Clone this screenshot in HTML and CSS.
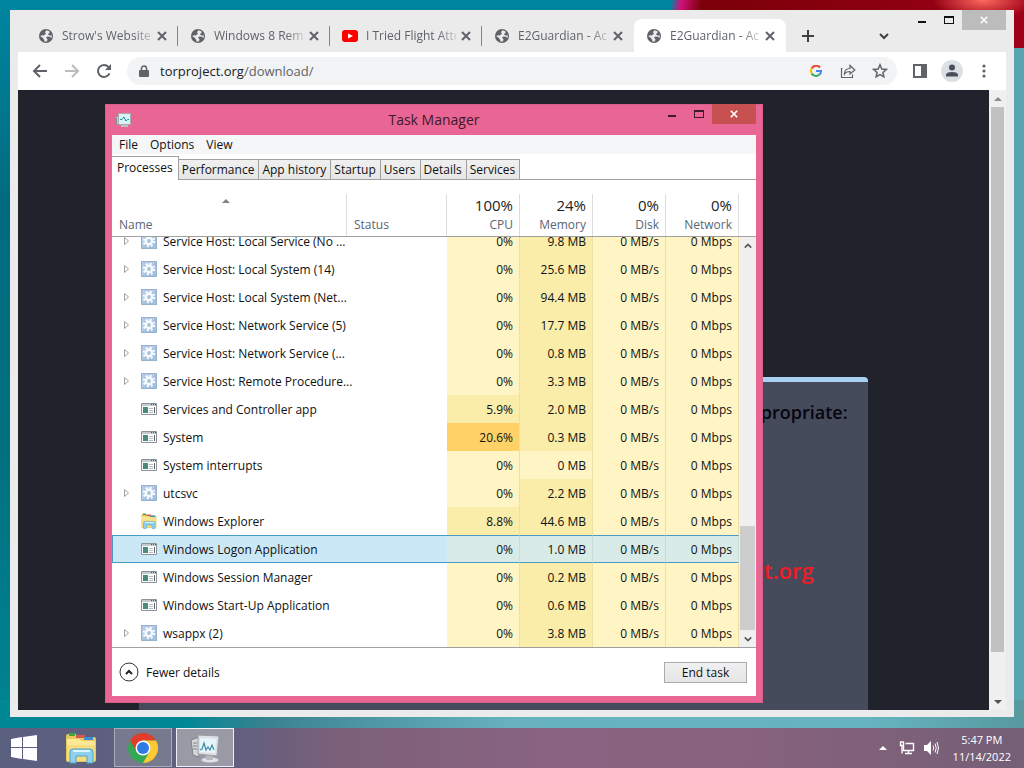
FILE: index.html
```html
<!DOCTYPE html>
<html lang="en">
<head>
  <meta charset="UTF-8">
  <meta name="viewport" content="width=device-width, initial-scale=1.0">
  <title>Desktop</title>
  <link rel="stylesheet" href="styles.css">
</head>
<body>
  <!-- shared icons -->
  <svg class="sprite" aria-hidden="true">
    <symbol id="globe" viewBox="0 0 16 16">
      <circle cx="8" cy="8" r="7" fill="#5f6368"/>
      <path d="M8.6 2.2 6.8 4.3 8 5.6 6.3 7.2 3.2 7.6 2.4 8.6 4.6 9.6 6.4 12.2 6.2 13.6 8.8 13.4 9.6 11.6 8 9.8 9.6 8.4 12 8.8 13.6 10 13.8 7.6 11.6 7.4 9.8 6.2 11.6 4.8 11.4 3.2z" fill="#ececee"/>
    </symbol>
    <symbol id="close" viewBox="0 0 10 10">
      <path d="M1 1 9 9M9 1 1 9" fill="none" stroke="currentColor" stroke-width="2"/>
    </symbol>
    <symbol id="minimize" viewBox="0 0 10 10">
      <path d="M1 6H9V8H1z" fill="currentColor"/>
    </symbol>
    <symbol id="maximize" viewBox="0 0 10 10">
      <path d="M0 1H10V9H0zM1 3V8H9V3z" fill="currentColor" fill-rule="evenodd"/>
    </symbol>
    <symbol id="chevron" viewBox="0 0 10 10">
      <path d="M1 3 5 7 9 3" fill="none" stroke="currentColor" stroke-width="2"/>
    </symbol>
    <symbol id="expand" viewBox="0 0 8 10">
      <path d="M1.500 1.500V8.500L5.500 5z" fill="#fff" stroke="#a0a0a0"/>
    </symbol>
    <symbol id="gear" viewBox="0 0 16 16">
      <path d="M0 0H16V16H0z" fill="#a3bfdc"/>
      <path d="M0 16V0H16L0 16z" fill="#b4cce5"/>
      <path d="M.5.5H15.500V15.500H.5z" fill="none" stroke="#97b2d0"/>
      <circle cx="8" cy="8" r="5.200" fill="none" stroke="#f8fbff" stroke-width="2.200" stroke-dasharray="2.040 2.040"/>
      <circle cx="8" cy="8" r="3.200" fill="#a9c3de" stroke="#f8fbff" stroke-width="2.400"/>
    </symbol>
    <symbol id="app" viewBox="0 0 16 16">
      <path d="M.5 2.500H15.500V13.500H.5z" fill="#fdfdfd" stroke="#8d9499"/>
      <path d="M1 3H15V5H1z" fill="#c3c9ce"/>
      <path d="M10 3.500H11M12 3.500H13M14 3.500H15" stroke="#555"/>
      <path d="M2 6H7V12H2z" fill="#4a8a78"/>
      <path d="M8 7.500H12M8 9.500H12M8 11.500H12" stroke="#b9bdc2"/>
      <path d="M13.500 6V12" stroke="#5f6468"/>
    </symbol>
    <symbol id="folder" viewBox="0 0 32 32">
      <path d="M1 4Q1 2 3 2H11L13 5H29Q31 5 31 7V28Q31 30 29 30H3Q1 30 1 28z" fill="#e6c95c"/>
      <path d="M4 1H10V4H4z" fill="#3ba648"/>
      <path d="M11 3H20V6H11z" fill="#d9574c"/>
      <path d="M19 5H28V8H19z" fill="#3c8fd0"/>
      <path d="M2 7H14L17 9H30V27H2z" fill="#fbe795"/>
      <path d="M2 13H30V28Q30 29 29 29H3Q2 29 2 28z" fill="#f5dc7c"/>
      <path d="M5 31V20Q5 17 8 17H25Q28 17 28 20V31H22V24H11V31z" fill="#8fd0ec" stroke="#4fa3cc"/>
      <path d="M8 19H25" stroke="#dff5ff" stroke-width="2"/>
    </symbol>
    <symbol id="monitor" viewBox="0 0 32 32">
      <path d="M2 8 10 5V25L4 23z" fill="#d6d9dc" stroke="#7c8286"/>
      <path d="M4 11H8M4 14H8M4 17H8" stroke="#7c8286"/>
      <ellipse cx="21" cy="28" rx="9" ry="3" fill="#dfe2e4" stroke="#a1a5a8"/>
      <path d="M17 22H24V28H17z" fill="#b7bbbe"/>
      <path d="M9 3 30 4 28 24 9 22z" fill="#dfe2e4" stroke="#999ea2"/>
      <path d="M11 6 27 7 26 21 11 20z" fill="#e7f6fb"/>
      <path d="M11 18 13 17 15 11 17 18 19 15 21 18 23 13 25 18" fill="none" stroke="#3d8eaa" stroke-width="1.200"/>
    </symbol>
    <symbol id="monitor-small" viewBox="0 0 16 16">
      <path d="M.5 4.500H4V12.500H1.500V6" fill="#c9ced2" stroke="#7f8a90"/>
      <path d="M6 13H13V15H6z" fill="#b9c2c6"/>
      <path d="M3.500 1.500H15.500V12.500H3.500z" fill="#e6eaec" stroke="#a5adb2"/>
      <path d="M5 3H14V11H5z" fill="#d5f3f6"/>
      <path d="M5 7.500H7L9 5 11 9 12.500 7.500H14" fill="none" stroke="#2a8c98"/>
    </symbol>
  </svg>

  <div class="desktop">
    <main class="workspace">
      <section class="browser" aria-label="Browser">
        <header class="tab-strip">
          <div class="tab">
            <svg class="icon16"><use href="#globe"/></svg>
            <span class="tab-title">Strow's Website</span>
            <button class="tab-close" aria-label="Close tab"><svg><use href="#close"/></svg></button>
          </div>
          <div class="tab">
            <svg class="icon16"><use href="#globe"/></svg>
            <span class="tab-title">Windows 8 Rem</span>
            <button class="tab-close" aria-label="Close tab"><svg><use href="#close"/></svg></button>
          </div>
          <div class="tab">
            <svg class="icon16" viewBox="0 0 16 16"><rect y="2" width="16" height="12" rx="3" fill="#f00"/><path d="M6 5.500V10.500L11 8z" fill="#fff"/></svg>
            <span class="tab-title">I Tried Flight Atte</span>
            <button class="tab-close" aria-label="Close tab"><svg><use href="#close"/></svg></button>
          </div>
          <div class="tab last">
            <svg class="icon16"><use href="#globe"/></svg>
            <span class="tab-title">E2Guardian - Ac</span>
            <button class="tab-close" aria-label="Close tab"><svg><use href="#close"/></svg></button>
          </div>
          <div class="tab active">
            <svg class="icon16"><use href="#globe"/></svg>
            <span class="tab-title">E2Guardian - Ac</span>
            <button class="tab-close" aria-label="Close tab"><svg><use href="#close"/></svg></button>
          </div>
          <button class="new-tab" aria-label="New tab"><svg viewBox="0 0 12 12"><path d="M6 0V12M0 6H12" stroke="#3c4043" stroke-width="2"/></svg></button>
          <button class="tab-search" aria-label="Search tabs"><svg><use href="#chevron"/></svg></button>
          <div class="window-controls">
            <button aria-label="Minimize"><svg><use href="#minimize"/></svg></button>
            <button aria-label="Maximize"><svg><use href="#maximize"/></svg></button>
            <button class="close" aria-label="Close"><svg><use href="#close"/></svg></button>
          </div>
        </header>

        <nav class="toolbar">
          <button class="tool" aria-label="Back"><svg viewBox="0 0 16 16"><path d="M15 8H2M8 2 2 8 8 14" fill="none" stroke="#5f6368" stroke-width="2"/></svg></button>
          <button class="tool" aria-label="Forward"><svg viewBox="0 0 16 16"><path d="M1 8H14M8 2 14 8 8 14" fill="none" stroke="#babcbe" stroke-width="2"/></svg></button>
          <button class="tool" aria-label="Reload"><svg viewBox="0 0 16 16"><path d="M13.500 10.300A6 6 0 1 1 12.500 4" fill="none" stroke="#5f6368" stroke-width="2"/><path d="M15 1V7H9z" fill="#5f6368"/></svg></button>
          <div class="address">
            <svg class="lock" viewBox="0 0 10 12"><path d="M1 5H9Q10 5 10 6V11Q10 12 9 12H1Q0 12 0 11V6Q0 5 1 5z" fill="#5f6368"/><path d="M2.500 5V3.500A2.500 2.500 0 0 1 7.500 3.500V5" fill="none" stroke="#5f6368" stroke-width="1.500"/></svg>
            <a class="url" href="#"><span>torproject.org</span>/download/</a>
            <button class="tool" aria-label="Google"><svg class="small" viewBox="0 0 12 12"><path d="M10 2.500A5 5 0 0 0 1.700 3.500" fill="none" stroke="#ea4335" stroke-width="2"/><path d="M1.700 3.500A5 5 0 0 0 1.700 8.500" fill="none" stroke="#fbbc05" stroke-width="2"/><path d="M1.700 8.500A5 5 0 0 0 9.200 9.800" fill="none" stroke="#34a853" stroke-width="2"/><path d="M9.200 9.800A5 5 0 0 0 11 6H6" fill="none" stroke="#4285f4" stroke-width="2"/></svg></button>
            <button class="tool" aria-label="Share"><svg viewBox="0 0 16 16"><path d="M2.500 5.500H1.500V14.500H12.500V11.500M4.500 11Q4.500 5.500 10 5.500V2.500L14.800 7 10 11V8.500Q6 8.500 4.500 11z" fill="none" stroke="#5f6368" stroke-width="1.200"/></svg></button>
            <button class="tool" aria-label="Bookmark"><svg viewBox="0 0 16 16"><path d="M8 1.800 9.800 6 14.300 6.400 10.900 9.400 11.900 13.800 8 11.500 4.100 13.800 5.100 9.400 1.700 6.400 6.200 6z" fill="none" stroke="#5f6368" stroke-width="1.500"/></svg></button>
          </div>
          <button class="tool" aria-label="Side panel"><svg viewBox="0 0 16 16"><path d="M1 1H15V15H1zM3 3V13H9V3z" fill="#5f6368" fill-rule="evenodd"/></svg></button>
          <button class="tool" aria-label="Profile"><svg class="avatar" viewBox="0 0 22 22"><circle cx="11" cy="11" r="11" fill="#dcdfe4"/><circle cx="11" cy="7.500" r="3" fill="#49505c"/><path d="M5 16.500V15Q5 12 11 12T17 15V16.500z" fill="#49505c"/></svg></button>
          <button class="tool" aria-label="Menu"><svg viewBox="0 0 16 16"><circle cx="8" cy="3" r="1.600" fill="#5f6368"/><circle cx="8" cy="8" r="1.600" fill="#5f6368"/><circle cx="8" cy="13" r="1.600" fill="#5f6368"/></svg></button>
        </nav>

        <div class="viewport">
          <div class="page">
            <article class="notice">
              <h2>propriate:</h2>
              <p>t.org</p>
            </article>
          </div>
          <div class="scrollbar page-scroll">
            <button aria-label="Scroll up"><svg viewBox="0 0 8 8"><path d="M0 6 4 2 8 6z" fill="#8b8b8b"/></svg></button>
            <div class="track"><div class="thumb"></div></div>
            <button aria-label="Scroll down"><svg viewBox="0 0 8 8"><path d="M0 2H8L4 6z" fill="#505050"/></svg></button>
          </div>
        </div>
      </section>

      <section class="task-manager" aria-label="Task Manager">
        <header class="title-bar">
          <svg class="icon16"><use href="#monitor-small"/></svg>
          <h1>Task Manager</h1>
          <div class="window-controls">
            <button aria-label="Minimize"><svg><use href="#minimize"/></svg></button>
            <button aria-label="Maximize"><svg><use href="#maximize"/></svg></button>
            <button class="close" aria-label="Close"><svg><use href="#close"/></svg></button>
          </div>
        </header>
        <div class="tm-body">
          <nav class="menu">
            <button>File</button>
            <button>Options</button>
            <button>View</button>
          </nav>
          <div class="tm-tabs" role="tablist">
            <button role="tab" class="selected" aria-selected="true">Processes</button>
            <button role="tab">Performance</button>
            <button role="tab">App history</button>
            <button role="tab">Startup</button>
            <button role="tab">Users</button>
            <button role="tab">Details</button>
            <button role="tab">Services</button>
          </div>

          <div class="head-wrap">
            <svg class="sort" viewBox="0 0 8 4"><path d="M0 4 4 0 8 4z" fill="#808080"/></svg>
            <table class="grid head">
              <colgroup><col class="c-name"><col class="c-status"><col class="c-val"><col class="c-val"><col class="c-val"><col class="c-val"></colgroup>
              <thead>
                <tr>
                  <th>Name</th>
                  <th>Status</th>
                  <th><b>100%</b>CPU</th>
                  <th><b>24%</b>Memory</th>
                  <th><b>0%</b>Disk</th>
                  <th><b>0%</b>Network</th>
                </tr>
              </thead>
            </table>
          </div>

          <div class="list">
            <div class="rows">
              <table class="grid">
                <colgroup><col class="c-name"><col class="c-status"><col class="c-val"><col class="c-val"><col class="c-val"><col class="c-val"></colgroup>
                <tbody>
                  <tr><td><div class="proc"><svg class="arrow"><use href="#expand"/></svg><svg class="icon16"><use href="#gear"/></svg>Service Host: Local Service (No ...</div></td><td></td><td>0%</td><td class="warm">9.8 MB</td><td>0 MB/s</td><td>0 Mbps</td></tr>
                  <tr><td><div class="proc"><svg class="arrow"><use href="#expand"/></svg><svg class="icon16"><use href="#gear"/></svg>Service Host: Local System (14)</div></td><td></td><td>0%</td><td class="warm">25.6 MB</td><td>0 MB/s</td><td>0 Mbps</td></tr>
                  <tr><td><div class="proc"><svg class="arrow"><use href="#expand"/></svg><svg class="icon16"><use href="#gear"/></svg>Service Host: Local System (Net...</div></td><td></td><td>0%</td><td class="warm">94.4 MB</td><td>0 MB/s</td><td>0 Mbps</td></tr>
                  <tr><td><div class="proc"><svg class="arrow"><use href="#expand"/></svg><svg class="icon16"><use href="#gear"/></svg>Service Host: Network Service (5)</div></td><td></td><td>0%</td><td class="warm">17.7 MB</td><td>0 MB/s</td><td>0 Mbps</td></tr>
                  <tr><td><div class="proc"><svg class="arrow"><use href="#expand"/></svg><svg class="icon16"><use href="#gear"/></svg>Service Host: Network Service (...</div></td><td></td><td>0%</td><td class="warm">0.8 MB</td><td>0 MB/s</td><td>0 Mbps</td></tr>
                  <tr><td><div class="proc"><svg class="arrow"><use href="#expand"/></svg><svg class="icon16"><use href="#gear"/></svg>Service Host: Remote Procedure...</div></td><td></td><td>0%</td><td class="warm">3.3 MB</td><td>0 MB/s</td><td>0 Mbps</td></tr>
                  <tr><td><div class="proc"><span class="arrow"></span><svg class="icon16"><use href="#app"/></svg>Services and Controller app</div></td><td></td><td class="warm">5.9%</td><td class="warm">2.0 MB</td><td>0 MB/s</td><td>0 Mbps</td></tr>
                  <tr><td><div class="proc"><span class="arrow"></span><svg class="icon16"><use href="#app"/></svg>System</div></td><td></td><td class="hot">20.6%</td><td class="warm">0.3 MB</td><td>0 MB/s</td><td>0 Mbps</td></tr>
                  <tr><td><div class="proc"><span class="arrow"></span><svg class="icon16"><use href="#app"/></svg>System interrupts</div></td><td></td><td>0%</td><td>0 MB</td><td>0 MB/s</td><td>0 Mbps</td></tr>
                  <tr><td><div class="proc"><svg class="arrow"><use href="#expand"/></svg><svg class="icon16"><use href="#gear"/></svg>utcsvc</div></td><td></td><td>0%</td><td class="warm">2.2 MB</td><td>0 MB/s</td><td>0 Mbps</td></tr>
                  <tr><td><div class="proc"><span class="arrow"></span><svg class="icon16"><use href="#folder"/></svg>Windows Explorer</div></td><td></td><td class="warm">8.8%</td><td class="warm">44.6 MB</td><td>0 MB/s</td><td>0 Mbps</td></tr>
                  <tr class="selected"><td><div class="proc"><span class="arrow"></span><svg class="icon16"><use href="#app"/></svg>Windows Logon Application</div></td><td></td><td>0%</td><td>1.0 MB</td><td>0 MB/s</td><td>0 Mbps</td></tr>
                  <tr><td><div class="proc"><span class="arrow"></span><svg class="icon16"><use href="#app"/></svg>Windows Session Manager</div></td><td></td><td>0%</td><td class="warm">0.2 MB</td><td>0 MB/s</td><td>0 Mbps</td></tr>
                  <tr><td><div class="proc"><span class="arrow"></span><svg class="icon16"><use href="#app"/></svg>Windows Start-Up Application</div></td><td></td><td>0%</td><td class="warm">0.6 MB</td><td>0 MB/s</td><td>0 Mbps</td></tr>
                  <tr><td><div class="proc"><svg class="arrow"><use href="#expand"/></svg><svg class="icon16"><use href="#gear"/></svg>wsappx (2)</div></td><td></td><td>0%</td><td class="warm">3.8 MB</td><td>0 MB/s</td><td>0 Mbps</td></tr>
                </tbody>
              </table>
            </div>
            <div class="scrollbar list-scroll">
              <button class="up" aria-label="Scroll up"><svg><use href="#chevron"/></svg></button>
              <div class="track"><div class="thumb"></div></div>
              <button aria-label="Scroll down"><svg><use href="#chevron"/></svg></button>
            </div>
          </div>

          <footer class="tm-footer">
            <button class="fewer">
              <svg viewBox="0 0 20 20"><circle cx="10" cy="10" r="9" fill="#fff" stroke="#333"/><path d="M7 12 10 9 13 12" fill="none" stroke="#222" stroke-width="2"/></svg>
              Fewer details
            </button>
            <button class="end-task">End task</button>
          </footer>
        </div>
      </section>
    </main>

    <footer class="taskbar">
      <button class="start" aria-label="Start"><svg viewBox="0 0 26 26"><path d="M0 4 11 2V12H0zM12 2 26 0V12H12zM0 13H11V24L0 22zM12 13H26V26L12 24z" fill="#fff"/></svg></button>
      <button class="task" aria-label="File Explorer"><svg><use href="#folder"/></svg></button>
      <button class="task open" aria-label="Chrome">
        <svg viewBox="0 0 32 32">
          <circle cx="16" cy="16" r="15" fill="#34a853"/>
          <path d="M3 8.500A15 15 0 0 1 29 8.500H16L9.500 19.800z" fill="#e33b2e"/>
          <path d="M29 8.500A15 15 0 0 1 16 31L22.500 19.800 16 8.500z" fill="#fcc934"/>
          <circle cx="16" cy="16" r="7.500" fill="#fff"/>
          <circle cx="16" cy="16" r="6" fill="#2f7ae5"/>
        </svg>
      </button>
      <button class="task open current" aria-label="Task Manager"><svg><use href="#monitor"/></svg></button>
      <div class="tray">
        <button aria-label="Show hidden icons"><svg class="tiny" viewBox="0 0 8 4"><path d="M0 4 4 0 8 4z" fill="#fff"/></svg></button>
        <button aria-label="Network"><svg viewBox="0 0 16 16"><path d="M6.500 3.500H14.500V10.500H4.500V6M9.500 10.500V13M6 13.500H13" fill="none" stroke="#fff" stroke-width="1.400"/><path d="M1.500 2H4.500V5.500H1.500zM3 5.500V13.500" fill="none" stroke="#fff" stroke-width="1.400"/></svg></button>
        <button aria-label="Volume"><svg viewBox="0 0 16 16"><path d="M1 5H4L8 1V15L4 11H1z" fill="#fff"/><path d="M10 5.500Q11.500 8 10 10.500M12 3.500Q14.500 8 12 12.500M14 2Q17 8 14 14" fill="none" stroke="#fff"/></svg></button>
        <time class="clock" datetime="2022-11-14T17:47">5:47 PM<br>11/14/2022</time>
      </div>
    </footer>
  </div>
</body>
</html>
```
FILE: styles.css
```css
* {
  box-sizing: border-box;
}

body {
  margin: 0;
  font-family: 'Open Sans', 'Noto Sans', sans-serif;
  font-size: 12px;
  color: #111;
}

button {
  display: flex;
  align-items: center;
  justify-content: center;
  padding: 0;
  border: none;
  background: none;
  font: inherit;
  color: inherit;
}

svg {
  display: block;
  flex: none;
}

.sprite {
  position: absolute;
  width: 0;
  height: 0;
}

.icon16 {
  width: 16px;
  height: 16px;
}

.desktop {
  display: flex;
  flex-direction: column;
  height: 100vh;
  overflow: hidden;
  background:
    radial-gradient(ellipse 50px 20px at 96% 0, #ff6a60, transparent) no-repeat,
    linear-gradient(100deg, transparent 65%, #d0107a 66%, #7c0008 68%, #8a0010 85%, #a00018) top / 100% 48px no-repeat,
    linear-gradient(90deg, #008896, #008896 18%, #3a8290 26%, #68b2bf 50%, #66b4c0 85%, #57999f) 0 700px / 100% 40px no-repeat,
    linear-gradient(90deg, transparent 50%, #57a5ae 50%) 0 48px no-repeat,
    linear-gradient(#0086a0, #006b80 200px, #00707f 450px, #008896);
}

.workspace {
  position: relative;
  flex: 1;
}

/* browser window */
.browser {
  position: absolute;
  inset: 10px 10px 11px 10px;
  display: flex;
  flex-direction: column;
  padding: 0 8px 7px;
  background: #ebebeb;
}

.tab-strip {
  display: flex;
  align-items: flex-end;
  height: 42px;
  padding-left: 8px;
}

.tab {
  display: flex;
  align-items: center;
  flex: 0 1 152px;
  min-width: 0;
  height: 33px;
  padding: 0 10px 0 12px;
  color: #5f6368;
  background: linear-gradient(#808488, #808488) right center / 1px 20px no-repeat;
}

.tab.last {
  background: none;
}

.tab.active {
  background: #fff;
  border-radius: 8px 8px 0 0;
}

.tab-title {
  flex: 1;
  margin-left: 8px;
  overflow: hidden;
  white-space: nowrap;
  mask-image: linear-gradient(90deg, #000 80%, transparent 105%);
}

.tab-close {
  width: 12px;
  height: 20px;
  margin-left: 4px;
}

.tab-close svg,
.tab-search svg {
  width: 10px;
  height: 10px;
}

.new-tab {
  width: 44px;
  height: 33px;
}

.new-tab svg {
  width: 12px;
  height: 12px;
}

.tab-search {
  width: 28px;
  height: 33px;
  margin-left: auto;
  margin-right: 10px;
  color: #3c4043;
}

.window-controls {
  display: flex;
  align-self: flex-start;
  height: 20px;
}

.window-controls button {
  width: 27px;
  height: 20px;
}

.window-controls .close {
  width: 44px;
  background: #bcbcbc;
  color: #fff;
}

.window-controls svg {
  width: 10px;
  height: 10px;
}

.window-controls .close svg {
  width: 8px;
  height: 8px;
}

.toolbar {
  display: flex;
  align-items: center;
  height: 38px;
  padding: 0 6px;
  background: #fff;
}

.tool {
  width: 32px;
  height: 26px;
}

.tool svg {
  width: 16px;
  height: 16px;
}

.tool .small {
  width: 12px;
  height: 12px;
}

.tool .avatar {
  width: 22px;
  height: 22px;
}

.address {
  display: flex;
  align-items: center;
  flex: 1;
  height: 28px;
  margin: 0 7px;
  padding: 0 1px 0 12px;
  border-radius: 14px;
  background: #f1f3f4;
}

.lock {
  width: 10px;
  height: 12px;
}

.url {
  flex: 1;
  margin-left: 11px;
  font-size: 13px;
  color: #5f6368;
  text-decoration: none;
}

.url span {
  color: #202124;
}

.viewport {
  display: flex;
  flex: 1;
  min-height: 0;
}

.page {
  flex: 1;
  overflow: hidden;
  background: #20222c;
}

.notice {
  width: 75%;
  height: 100%;
  margin: 287px auto 0;
  padding: 19px 20px;
  border-top: 5px solid #a8d0f5;
  border-radius: 4px 4px 0 0;
  background: #464b5b;
  text-align: right;
}

.notice h2 {
  margin: 0;
  font-size: 18px;
  font-weight: 600;
  line-height: 22px;
  color: #050510;
}

.notice p {
  margin: 132px 34px 0 0;
  font-size: 22px;
  font-weight: 600;
  line-height: 30px;
  color: #ee1c24;
}

.scrollbar {
  display: flex;
  flex-direction: column;
  width: 17px;
  background: #f0f0f0;
}

.scrollbar button {
  height: 17px;
}

.scrollbar svg {
  width: 8px;
  height: 8px;
}

.track {
  flex: 1;
}

.page-scroll .thumb {
  height: 93%;
  margin: 0 2px;
  background: #c1c1c1;
}

/* task manager window */
.task-manager {
  position: absolute;
  top: 104px;
  left: 105px;
  display: flex;
  flex-direction: column;
  width: 658px;
  padding: 0 7px 7px;
  background: #e96593;
  box-shadow: inset 0 0 0 1px #d95f8b;
}

.title-bar {
  display: grid;
  grid-template-columns: 1fr auto 1fr;
  align-items: center;
  height: 31px;
  color: #3f1a2b;
}

.title-bar .icon16 {
  margin-left: 3px;
}

.title-bar h1 {
  margin: 0;
  font-size: 14px;
  font-weight: normal;
}

.title-bar .window-controls {
  justify-self: end;
}

.title-bar .close {
  background: #c75050;
}

.tm-body {
  background: #fff;
}

.menu {
  display: flex;
  gap: 12px;
  height: 19px;
  padding: 0 7px;
  background: #f5f6f7;
}

.tm-tabs {
  display: flex;
  align-items: flex-end;
  height: 26px;
  border-bottom: 1px solid #a0a0a0;
}

.tm-tabs button {
  height: 20px;
  padding: 0 4px 0 3px;
  border: 1px solid #a0a0a0;
  border-width: 1px 1px 0 0;
  background: linear-gradient(#f0f0f0, #e6e6e6);
}

.tm-tabs .selected {
  height: 24px;
  margin-bottom: -1px;
  padding: 0 5px 3px;
  background: #fff;
}

.head-wrap {
  position: relative;
  padding-top: 14px;
  border-bottom: 1px solid #a0a0a0;
}

.sort {
  position: absolute;
  top: 19px;
  left: 110px;
  width: 8px;
  height: 4px;
}

.grid {
  width: 627px;
  border-collapse: separate;
  border-spacing: 0;
  table-layout: fixed;
}

.c-status {
  width: 100px;
}

.c-val {
  width: 73px;
}

.head th {
  height: 40px;
  padding: 0 6px 2px 7px;
  border-right: 1px solid #dedede;
  font-weight: normal;
  line-height: 18px;
  text-align: left;
  vertical-align: bottom;
  color: #5a6675;
}

.head th:nth-child(n+3) {
  text-align: right;
}

.head b {
  display: block;
  font-size: 15px;
  font-weight: normal;
  line-height: 22px;
  color: #222;
}

.list {
  display: flex;
  height: 411px;
  border-bottom: 1px solid #a0a0a0;
}

/* the list is scrolled to the end, so the first row is cut off */
.rows {
  display: flex;
  flex: 1;
  align-items: flex-end;
  overflow: hidden;
}

.rows td {
  height: 28px;
  padding: 0 6px 0 0;
  white-space: nowrap;
}

.rows td:nth-child(n+3) {
  border-right: 1px solid #ece0a6;
  background: #fff4c4;
  text-align: right;
}

.rows .warm.warm.warm {
  background: #f9eda9;
}

.rows .hot.hot.hot {
  background: #ffd166;
}

.rows .selected td {
  border-top: 1px solid #4a9cc4;
  border-bottom: 1px solid #4a9cc4;
  background: #cbe8f6;
}

.rows .selected td:first-child {
  border-left: 1px solid #4a9cc4;
}

.rows .selected td:nth-child(n+3) {
  border-right-color: #c9dcd6;
  background: #d8ebe7;
}

.rows .selected .proc {
  margin-left: -1px;
}

.proc {
  display: flex;
  align-items: center;
}

.proc .icon16 {
  margin: 0 6px 0 10px;
}

.arrow {
  width: 8px;
  height: 10px;
  margin-left: 11px;
}

.list-scroll {
  color: #555;
}

.list-scroll .up svg {
  transform: rotate(180deg);
}

.list-scroll .track {
  display: flex;
  align-items: flex-end;
}

.list-scroll .thumb {
  flex: 1;
  height: 104px;
  margin: 0 1px;
  background: #cdcdcd;
}

.tm-footer {
  display: flex;
  align-items: center;
  justify-content: space-between;
  height: 48px;
  padding: 0 9px 0 7px;
}

.fewer svg {
  width: 20px;
  height: 20px;
  margin-right: 7px;
}

.end-task {
  width: 83px;
  height: 21px;
  border: 1px solid #acacac;
  background: linear-gradient(#f0f0f0, #e5e5e5);
}

/* taskbar */
.taskbar {
  display: flex;
  gap: 4px;
  height: 40px;
  background: linear-gradient(90deg, #5a5f80, #655f7e 25%, #7c6079 33%, #896482 55%, #86627c 75%, #745f76);
}

.start {
  width: 48px;
}

.start svg {
  width: 26px;
  height: 26px;
}

.task {
  width: 58px;
  height: 39px;
}

.task svg {
  width: 32px;
  height: 32px;
}

.open {
  border: 1px solid #a9abbd;
  background: #77798f;
}

.current {
  border-color: #f0f0f4;
  background: #9a9aa6;
}

.tray {
  display: flex;
  align-items: center;
  margin-left: auto;
  padding-right: 13px;
  color: #fff;
}

.tray button {
  width: 24px;
  height: 40px;
}

.tray svg {
  width: 16px;
  height: 16px;
}

.tray .tiny {
  width: 8px;
  height: 4px;
}

.clock {
  margin-left: 10px;
  font-size: 11px;
  line-height: 17px;
  text-align: center;
}
```
